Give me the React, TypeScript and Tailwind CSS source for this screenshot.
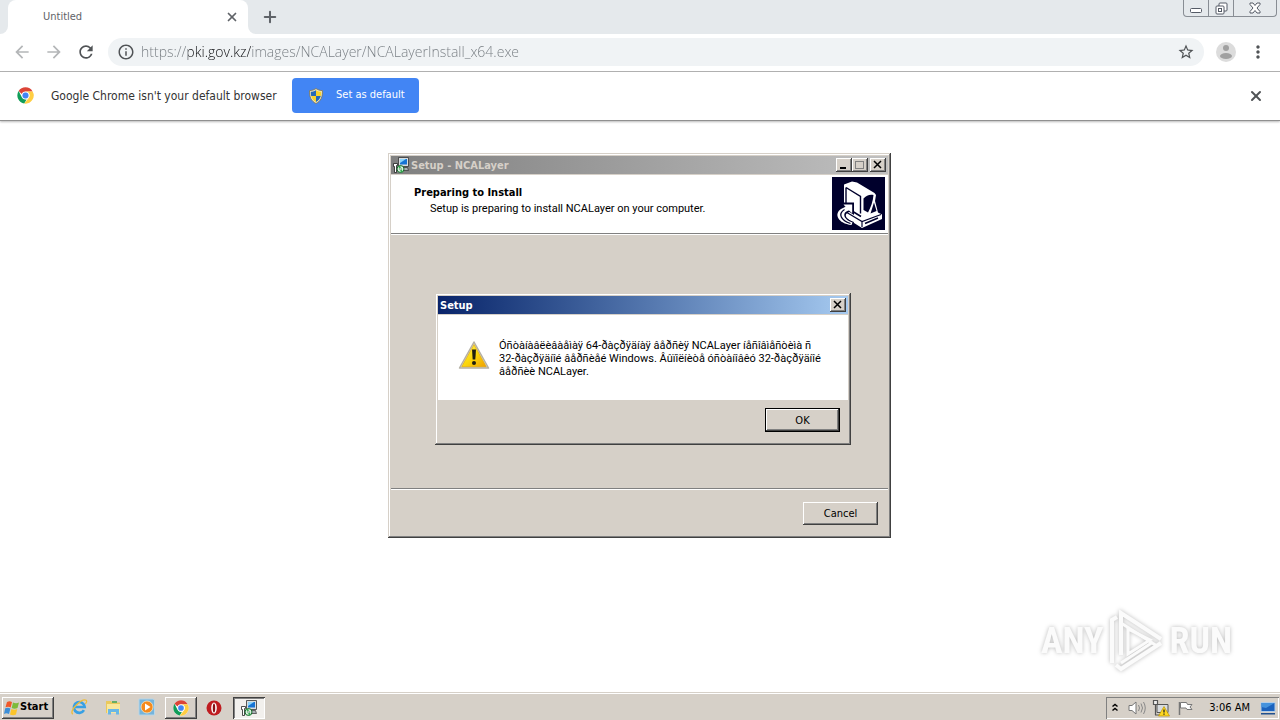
import type { ReactNode } from "react";
import { Plus, X } from "lucide-react";
import {
  MdArrowBack,
  MdArrowForward,
  MdInfoOutline,
  MdMoreVert,
  MdRefresh,
  MdStarBorder,
} from "react-icons/md";

const RAISED =
  "bg-[#d6d0c8] shadow-[inset_-1px_-1px_#404040,inset_1px_1px_#fff,inset_-2px_-2px_#808080]";
const WINDOW_FRAME =
  "bg-[#d6d0c8] p-[3px] shadow-[inset_-1px_-1px_#404040,inset_1px_1px_#d6d0c8,inset_-2px_-2px_#808080,inset_2px_2px_#fff]";

function ChromeLogo({ className }: { className: string }) {
  return (
    <svg viewBox="0 0 48 48" className={className} aria-hidden="true">
      <circle cx="24" cy="24" r="23" fill="#fff" />
      <path d="M24 1a23 23 0 0 1 20 11.5H24A11.5 11.5 0 0 0 13.400 19.500L4.600 11.600A23 23 0 0 1 24 1Z" fill="#dc4437" />
      <path d="M4.600 11.600 14 29.700A11.500 11.500 0 0 0 27 35.100L20.500 46.700A23 23 0 0 1 4.600 11.600Z" fill="#109d58" />
      <path d="M44 12.500A23 23 0 0 1 20.500 46.700L34 29.800A11.500 11.500 0 0 0 31 14.800L24 12.500Z" fill="#ffce43" />
      <circle cx="24" cy="24" r="10.500" fill="#f5f5f5" />
      <circle cx="24" cy="24" r="8.500" fill="#4285f4" />
    </svg>
  );
}

function ShieldIcon() {
  return (
    <svg viewBox="0 0 16 16" className="size-4" aria-hidden="true">
      <path d="M8 .5C6 2 4 2.500 1.500 2.600 1.300 9 3 13 8 15.500 13 13 14.700 9 14.500 2.600 12 2.500 10 2 8 .5Z" fill="#e8e2c0" stroke="#7d7452" strokeWidth=".8" />
      <path d="M8 2.200C6 3.300 4.500 3.700 2.800 3.800c0 1.500 0 2.800.4 4.200H8Z" fill="#2468b8" />
      <path d="M8 2.200c2 1.100 3.500 1.500 5.200 1.600 0 1.500 0 2.800-.4 4.200H8Z" fill="#f8d22a" />
      <path d="M3.200 8H8v5.900c-2.600-1.300-4.100-3.300-4.800-5.900Z" fill="#f8d22a" />
      <path d="M12.800 8H8v5.900c2.600-1.300 4.100-3.300 4.800-5.900Z" fill="#2468b8" />
    </svg>
  );
}

function SetupIcon({ className }: { className: string }) {
  return (
    <svg viewBox="0 0 16 16" className={className} aria-hidden="true">
      <path d="M5.500.5h10v9h-10Z" fill="#d8dce0" stroke="#333" strokeWidth=".8" />
      <path d="M7 2h7v5.500H7Z" fill="#1673d4" />
      <path d="m7 6 6-4H7Z" fill="#8cd4fa" />
      <path d="M9 10.500h5.500l1 3H11Z" fill="#aab0b5" stroke="#333" strokeWidth=".7" />
      <path d="M.5 6.500h4v2h-1v7h-2v-6h-1Z" fill="#fff" stroke="#222" strokeWidth=".8" />
      <circle cx="7.500" cy="12" r="3.500" fill="#d8f0dc" stroke="#176b2c" strokeWidth="1" />
      <path d="M7.500 12 5 9.800A3.400 3.400 0 0 1 7.500 8.700Zm0 0 2.500 2.200a3.400 3.400 0 0 1-2.500 1.200Z" fill="#2ea94b" />
      <circle cx="7.500" cy="12" r="1" fill="#fff" stroke="#176b2c" strokeWidth=".5" />
    </svg>
  );
}

function InstallerArt() {
  return (
    <svg viewBox="0 0 53 53" className="size-[53px] bg-[#00002c]" role="img" aria-label="Installer">
      <path d="M12 7.500 20 4.500 25 5.500 42.500 16l1.500 2-1 6 3 11.500 4 2v4.500L30 51 11 39V34l1-1Z" fill="#fff" />
      <path d="M14 10.500 28.500 19.500v17M14 10.500V29" fill="none" stroke="#00002c" strokeWidth="1.400" />
      <path d="M31.500 21.500c2.500-3 6.500-4.500 10-3.500-.5 6-2.500 12-5.500 17.500L31.500 33Z" fill="#00002c" />
      <path d="M42 25.500 44.500 34 38.500 36.500Z" fill="#00002c" />
      <path d="m14 35 16 9.500 19-7M30 44.500V50" fill="none" stroke="#00002c" strokeWidth="1.200" />
      <path d="m20 34 9 5.500M33 46.500l13-5.500" stroke="#00002c" strokeWidth="1.600" />
      <path d="M9.500 25.500H22V38l-4.500-3C12 36.500 12 41.500 22 45l-1.500 4.500C4 49-1 37 8.500 31l4-2Z" fill="#00002c" />
      <path d="M11.500 27.500h8.700v8.800L17 33.500C10.500 34.500 10 42 20.500 45.500l-1 2.500C6 46.500 1.500 37 9 32l4.500-2.200Z" fill="#fff" />
      <path d="M12.500 32.500C5.500 37 9 43.500 18.500 46.500" fill="none" stroke="#00002c" strokeWidth="1.300" />
    </svg>
  );
}

function WarningIcon() {
  return (
    <svg viewBox="0 0 32 30" className="h-[30px] w-8 shrink-0" aria-hidden="true">
      <defs>
        <linearGradient id="warn" x1="0" y1="0" x2="1" y2="1">
          <stop offset="0" stopColor="#fff36a" />
          <stop offset=".5" stopColor="#fbd90c" />
          <stop offset="1" stopColor="#f0a000" />
        </linearGradient>
      </defs>
      <path d="M16 2 30.500 28h-29Z" fill="#e8e4d8" stroke="#b4b0a4" strokeWidth="1.500" strokeLinejoin="round" />
      <path d="M16 4.500 28.300 26.700H3.700Z" fill="url(#warn)" stroke="#dca000" strokeWidth=".6" />
      <path d="M14 9.500h4l-.7 10h-2.600Z" fill="#1e1e10" />
      <circle cx="16" cy="23" r="2" fill="#1e1e10" />
    </svg>
  );
}

function CaptionButton({ label, children }: { label: string; children: ReactNode }) {
  return (
    <button aria-label={label} className={`flex h-3.5 w-4 items-center justify-center ${RAISED}`}>
      <svg viewBox="0 0 16 14" className="h-3.5 w-4" fill="none" shapeRendering="crispEdges">
        {children}
      </svg>
    </button>
  );
}

const CROSS = (
  <path d="m4 3 7 7M11 3 4 10" stroke="#000" strokeWidth="1.500" shapeRendering="auto" />
);

function Browser() {
  return (
    <header className="shrink-0">
      <div className="flex h-[34px] items-start bg-[#e5e9ec]">
        <div className="flex w-2 self-stretch bg-white">
          <div className="flex-1 rounded-br-lg bg-[#e5e9ec]" />
        </div>
        <div className="flex h-full w-60 items-center justify-between rounded-t-lg bg-white pr-[9px] pl-[35px]">
          <span className="text-[11px] leading-4 text-[#5f6368]">Untitled</span>
          <button aria-label="Close tab" className="text-[#5f6368]">
            <X className="size-3.5" strokeWidth={3} />
          </button>
        </div>
        <div className="flex w-2 self-stretch bg-white">
          <div className="flex-1 rounded-bl-lg bg-[#e5e9ec]" />
        </div>
        <button aria-label="New tab" className="ml-1 flex h-[34px] w-5 items-center justify-center text-[#5f6368]">
          <Plus className="size-[18px] shrink-0" strokeWidth={2.7} />
        </button>
        <div className="mr-[3px] ml-auto flex h-[17px] divide-x divide-[#888d94] rounded-b border border-t-0 border-[#888d94]">
          <button aria-label="Minimize" className="flex w-[25px] items-center justify-center">
            <svg viewBox="0 0 12 12" className="size-3" fill="#fff" stroke="#555b66">
              <rect x=".5" y="6.500" width="11" height="4" rx="1" />
            </svg>
          </button>
          <button aria-label="Restore" className="flex w-[25px] items-center justify-center">
            <svg viewBox="0 0 13 13" className="size-[13px]" fill="#fff" stroke="#555b66">
              <rect x="4" y="1" width="8" height="8" rx="1" />
              <rect x="1" y="4" width="8" height="8" rx="1" />
              <rect x="3.500" y="6.500" width="3" height="3" />
            </svg>
          </button>
          <button aria-label="Close window" className="flex w-[42px] items-center justify-center">
            <svg viewBox="0 0 12 12" className="size-3" fill="#fff" stroke="#555b66">
              <path d="M1 1h3l2 2.500L8 1h3v1.500L8 6l3 3.500V11H8L6 8.500 4 11H1V9.500L4 6 1 2.500Z" />
            </svg>
          </button>
        </div>
      </div>

      <div className="flex h-[38px] items-center border-b border-[#b0b0b0] bg-white px-3 pb-px">
        <button aria-label="Back" className="mr-3 text-[#b4b6b8]">
          <MdArrowBack className="size-5" />
        </button>
        <button aria-label="Forward" className="mr-3 text-[#b4b6b8]">
          <MdArrowForward className="size-5" />
        </button>
        <button aria-label="Reload" className="mr-3 text-[#505356]">
          <MdRefresh className="size-5" />
        </button>
        <div className="flex h-7 flex-1 items-center rounded-full bg-[#f0f3f5] px-[9px]">
          <MdInfoOutline className="mr-1.5 size-[18px] shrink-0 text-[#505356]" />
          <input
            aria-label="Address"
            defaultValue="https://pki.gov.kz/images/NCALayer/NCALayerInstall_x64.exe"
            className="min-w-0 flex-1 bg-[linear-gradient(90deg,#757b80_47px,#101114_47px,#101114_110px,#757b80_110px)] bg-clip-text font-['Open_Sans',sans-serif] text-[14px] leading-5 font-light text-transparent outline-none"
          />
          <button aria-label="Bookmark" className="text-[#505356]">
            <MdStarBorder className="size-[18px]" />
          </button>
        </div>
        <button aria-label="Profile" className="ml-3 size-5">
          <svg viewBox="0 0 20 20" className="size-5">
            <circle cx="10" cy="10" r="10" fill="#dcdcdc" />
            <circle cx="10" cy="6" r="3" fill="#a0a0a0" />
            <ellipse cx="10" cy="14" rx="6" ry="3" fill="#a0a0a0" />
          </svg>
        </button>
        <button aria-label="Menu" className="ml-3 text-[#505356]">
          <MdMoreVert className="size-5" />
        </button>
      </div>

      <div className="flex h-[49px] items-center border-b border-[#909090] bg-white pr-4 pb-px pl-[17px] shadow-[0_1px_2px_#bbb]">
        <ChromeLogo className="mr-[17px] size-[17px]" />
        <p className="mr-3 w-[229px] text-[12px] leading-5 whitespace-nowrap text-[#333]">
          Google Chrome isn't your default browser
        </p>
        <button className="flex h-[35px] w-[127px] items-center gap-3 rounded bg-[#4285f4] pl-4 text-[11px] whitespace-nowrap text-white">
          <ShieldIcon />
          Set as default
        </button>
        <button aria-label="Dismiss" className="ml-auto text-[#505356]">
          <X className="size-4" strokeWidth={3} />
        </button>
      </div>
    </header>
  );
}

function MessageBox() {
  return (
    <section
      role="dialog"
      aria-label="Setup"
      className={`absolute top-[140px] left-[47px] w-[416px] text-[11px] leading-[13px] text-black ${WINDOW_FRAME}`}
    >
      <div className="flex h-[18px] items-center justify-between bg-linear-to-r from-[#0a246a] to-[#a6caf0] pr-0.5 pl-0.5 text-white">
        <h2 className="font-bold">Setup</h2>
        <CaptionButton label="Close">{CROSS}</CaptionButton>
      </div>
      <div className="mt-px flex h-[85px] items-start bg-white pt-6 pl-5">
        <div className="mt-px mr-[9px]">
          <WarningIcon />
        </div>
        <p className="font-[Roboto,sans-serif] whitespace-nowrap">
          Óñòàíàâëèâàåìàÿ 64-ðàçðÿäíàÿ âåðñèÿ NCALayer íåñîâìåñòèìà ñ
          <br />
          32-ðàçðÿäíîé âåðñèåé Windows. Âûïîëíèòå óñòàíîâêó 32-ðàçðÿäíîé
          <br />
          âåðñèè NCALayer.
        </p>
      </div>
      <div className="flex justify-end pt-2 pr-2 pb-2.5">
        <button className={`h-6 w-[75px] border border-black ${RAISED}`}>OK</button>
      </div>
    </section>
  );
}

function SetupWindow() {
  return (
    <section
      aria-label="Setup - NCALayer"
      className={`relative flex h-[385px] w-[503px] flex-col text-[11px] leading-[13px] text-black ${WINDOW_FRAME}`}
    >
      <div className="flex h-[18px] items-center bg-linear-to-r from-[#808080] to-[#c0c0c0] px-0.5">
        <SetupIcon className="mr-0.5 size-4" />
        <h1 className="mr-auto font-bold text-[#d6d0c8]">Setup - NCALayer</h1>
        <CaptionButton label="Minimize">
          <path d="M4 9.500h6" stroke="#000" strokeWidth="2" />
        </CaptionButton>
        <CaptionButton label="Maximize">
          <path d="M3.500 3h8v7.500h-8ZM3.500 3.500h8" stroke="#808080" />
        </CaptionButton>
        <div className="ml-0.5 flex">
          <CaptionButton label="Close">{CROSS}</CaptionButton>
        </div>
      </div>
      <div className="mt-px flex h-[59px] justify-between border-b border-[#808080] bg-white pt-0.5 pr-[3px] pl-[23px]">
        <div className="pt-[9px]">
          <h2 className="font-bold">Preparing to Install</h2>
          <p className="mt-[3px] pl-4 font-[Roboto,sans-serif]">
            Setup is preparing to install NCALayer on your computer.
          </p>
        </div>
        <InstallerArt />
      </div>
      <div className="flex-1 border-t border-white" />
      <div className="h-[47px] border-t border-[#808080]">
        <div className="flex h-full justify-end border-t border-white pt-3 pr-2.5">
          <button className={`h-[23px] w-[75px] ${RAISED}`}>Cancel</button>
        </div>
      </div>
      <MessageBox />
    </section>
  );
}

function Watermark() {
  return (
    <div className="absolute right-12 bottom-[19px] flex items-center gap-1 font-['Roboto_Condensed','Liberation_Sans_Narrow',sans-serif] text-[36px] leading-[64px] font-bold text-[#fbfbfb] drop-shadow-[0_0_2px_#bbb]">
      <span>ANY</span>
      <svg viewBox="0 0 58 64" className="h-16 w-[58px]" fill="none" stroke="#fbfbfb" strokeWidth="4" aria-hidden="true">
        <path d="M14 46V4l40 26M5 54V11l5-3M54 34 14 60l-5-4" />
        <path d="M21 20v25l22-14Z" strokeWidth="3" />
        <path d="M14 54 46 33M14 14l36 23" strokeWidth="3" />
      </svg>
      <span>RUN</span>
    </div>
  );
}

function Taskbar() {
  return (
    <footer className="flex h-7 shrink-0 items-center border-t border-[#d6d0c8] bg-[#d6d0c8] pr-px pl-0.5 text-[11px] text-black shadow-[inset_0_1px_#fff]">
      <button className={`mt-0.5 mr-4 flex h-[22px] w-[52px] items-center pl-0.5 font-bold ${RAISED}`}>
        <svg viewBox="0 0 16 16" className="size-4 shrink-0" aria-hidden="true">
          <path d="M3 2c2-1 3-1 5 0L6.700 7.500C5 6.500 3.500 6.500 1.500 7.300Z" fill="#f0582a" />
          <path d="M9 2.500c2 1 4 1 6 0L13.500 8c-2 1-4 1-5.800 0Z" fill="#7dbb3c" />
          <path d="M1.200 8.300c2-.8 3.500-.8 5.200.2L5 14c-2-1-3.500-1-5 0Z" fill="#3c8ed8" />
          <path d="M7.400 9c2 1 4 1 5.800 0L12 14.500c-2 1-4 1-6 0Z" fill="#fbc52c" />
        </svg>
        Start
      </button>
      <button aria-label="Internet Explorer" className="mt-px mr-4">
        <svg viewBox="0 0 20 20" className="size-[18px]" fill="none">
          <path d="M15.500 13.500a6 6 0 1 1 .8-3.500H5" stroke="#38a0e4" strokeWidth="3" />
          <path d="M3 18C-1 14 13 0 18 2.500c1 1 0 3-1 4" stroke="#eebc38" strokeWidth="1.500" />
        </svg>
      </button>
      <button aria-label="Explorer" className="mt-px mr-4">
        <svg viewBox="0 0 18 18" className="size-[18px]">
          <path d="M2 3h5l1 1.500h8V15H2Z" fill="#eac95c" />
          <path d="M3 6h13v9H3Z" fill="#f9e79c" />
          <path d="M4 11h11v5.500h-3V14H7v2.500H4Z" fill="#69b7e6" />
          <path d="M8 3h5v2H8Z" fill="#66ae66" />
        </svg>
      </button>
      <button aria-label="Media Player" className="mt-px mr-[9px]">
        <svg viewBox="0 0 18 18" className="size-[18px]">
          <path d="M1 1h14l1.500 1v15H1Z" fill="#75b4dc" stroke="#b7d6e8" />
          <circle cx="9" cy="9" r="6" fill="#f58a1d" stroke="#fff0d0" strokeWidth=".7" />
          <path d="m7 5.500 5.500 3.500L7 12.500Z" fill="#fff" />
        </svg>
      </button>
      <button aria-label="Chrome" className={`mt-0.5 mr-[9px] flex h-[22px] w-8 items-center justify-center ${RAISED}`}>
        <ChromeLogo className="size-4" />
      </button>
      <button aria-label="Opera" className="mt-0.5 mr-[11px]">
        <svg viewBox="0 0 16 16" className="size-4">
          <circle cx="8" cy="8" r="7.500" fill="#bf1c20" />
          <ellipse cx="8" cy="8" rx="2.800" ry="5.500" fill="#fff" />
          <ellipse cx="8" cy="8" rx="1.200" ry="4.500" fill="#8a1014" />
        </svg>
      </button>
      <button
        aria-label="Setup"
        className="mt-0.5 flex h-[22px] w-8 items-center justify-center bg-[#f2f0ed] shadow-[inset_1px_1px_#404040,inset_-1px_-1px_#fff,inset_2px_2px_#808080]"
      >
        <SetupIcon className="size-4" />
      </button>
      <div className="mt-0.5 ml-auto flex h-[22px] items-center pr-0.5 pl-1 shadow-[inset_1px_1px_#808080,inset_-1px_-1px_#fff]">
        <button aria-label="Show hidden icons" className="mr-2">
          <svg viewBox="0 0 10 12" className="h-3 w-2.5" fill="none" stroke="#000" strokeWidth="1.500">
            <path d="m2.500 4.500 2.500-2 2.500 2M2.500 8.500l2.500-2 2.500 2" />
          </svg>
        </button>
        <svg viewBox="0 0 18 16" className="mr-1.5 h-4 w-[18px]" aria-hidden="true">
          <path d="M1 5.500h3L8 2v12L4 10.500H1Z" fill="#fff" stroke="#777" />
          <path d="M10.500 5q2 3 0 6M13 3.500q3 4.500 0 9M15.500 2q3.500 6 0 12" fill="none" stroke="#888" />
        </svg>
        <svg viewBox="0 0 18 18" className="mr-[7px] size-[18px]" aria-hidden="true">
          <path d="M5 5.500h11v8H5Z" fill="#d8dce0" stroke="#555" />
          <path d="M1.500 1.500h4v4h-4ZM3.500 6v10M3 16h5" fill="#eee" stroke="#555" strokeWidth="1.200" />
          <path d="m12 7.500 5.500 9.500h-11Z" fill="#ffd820" stroke="#b89000" strokeWidth=".7" />
          <path d="M12 10.500v3M12 14.500v1.200" stroke="#222" strokeWidth="1.300" />
        </svg>
        <svg viewBox="0 0 16 16" className="mr-4 size-4" aria-hidden="true">
          <path d="M2.500 2v13" stroke="#777" strokeWidth="1.500" />
          <path d="M3.500 2.500h6l1 2H15l-2 2.500 2 2.500h-5l-1-1.500H3.500Z" fill="#fff" stroke="#777" />
        </svg>
        <time className="mr-[9px] leading-[14px] whitespace-nowrap">3:06 AM</time>
        <button aria-label="Show desktop">
          <svg viewBox="0 0 18 16" className="h-4 w-[18px]">
            <path d="M2 2.500h14v9H2Z" fill="#1b62bd" stroke="#b4cde6" />
            <path d="M2.500 3h13L7 8 2.500 7Z" fill="#4492dd" />
            <path d="M2 13h14v1.500H2Z" fill="#20508e" />
          </svg>
        </button>
      </div>
    </footer>
  );
}

export default function App() {
  return (
    <div className="flex min-h-screen flex-col bg-white font-['DejaVu_Sans_Condensed','DejaVu_Sans',sans-serif]">
      <Browser />
      <main className="relative flex flex-1 items-start justify-center pt-8 pr-px">
        <SetupWindow />
        <Watermark />
      </main>
      <Taskbar />
    </div>
  );
}
